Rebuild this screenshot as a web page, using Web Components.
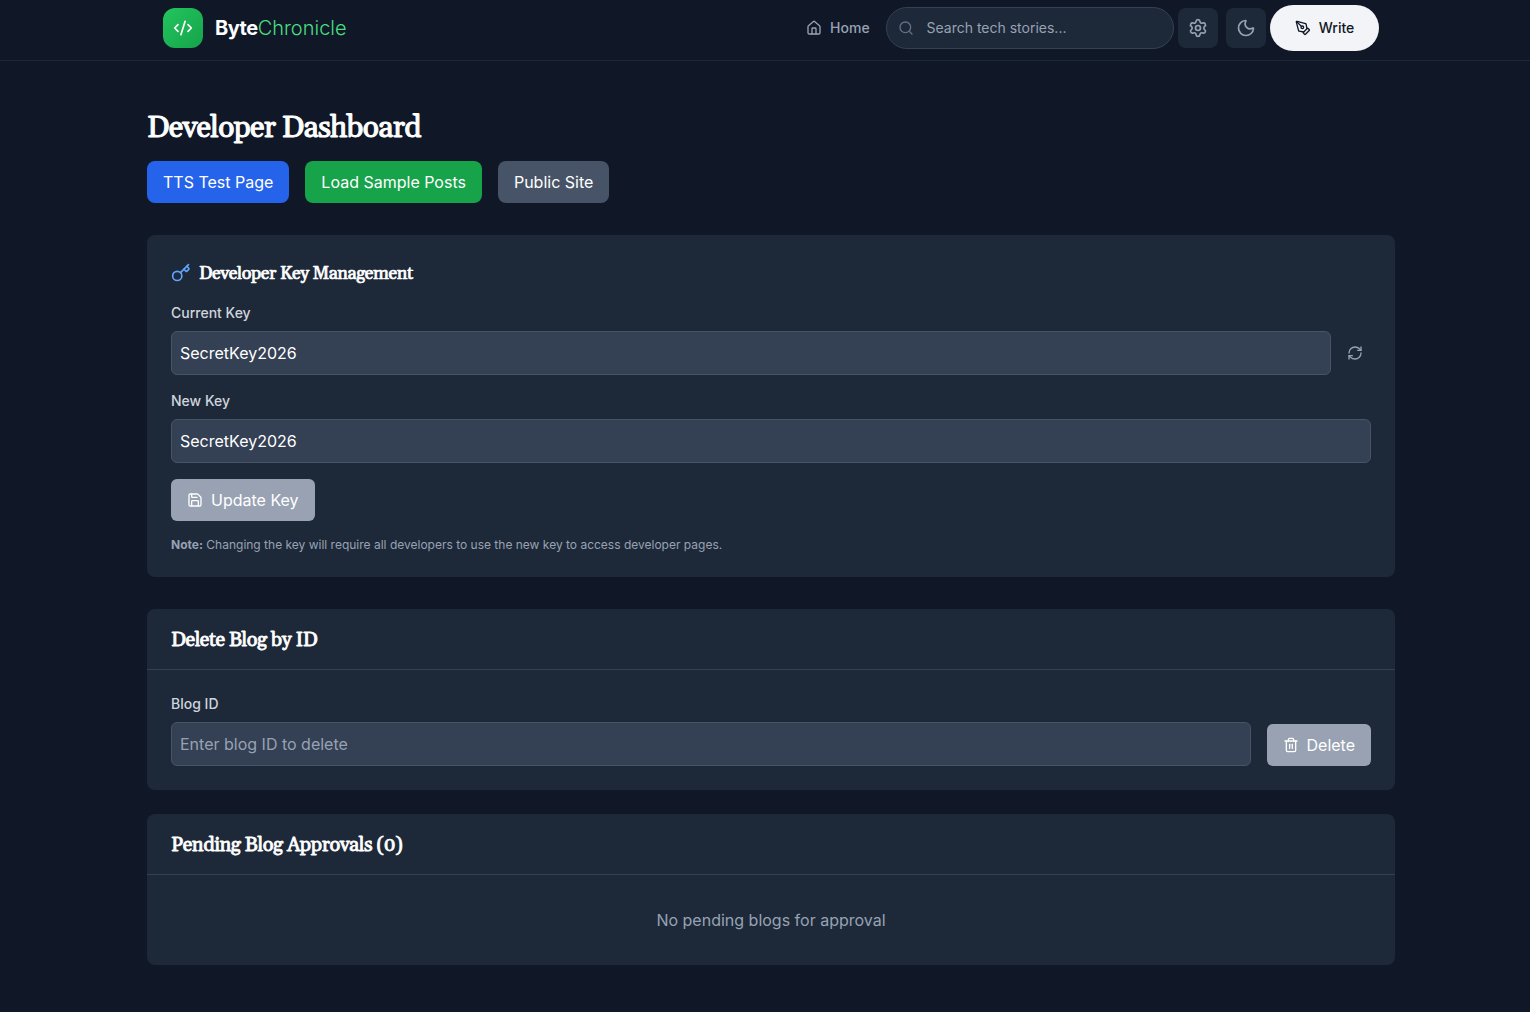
<!DOCTYPE html>
<html lang="en">
<head>
<meta charset="utf-8">
<title>ByteChronicle</title>
<style>
html,body{margin:0;padding:0;background:#101828}
body{font-family:Inter,"Liberation Sans",sans-serif;font-size:16px;line-height:24px;color:#fff;overflow:hidden;height:1012px}
</style>
</head>
<body>
<dev-page></dev-page>
<script>
const ICONS={
code:'<path d="m18 16 4-4-4-4"/><path d="m6 8-4 4 4 4"/><path d="m14.5 4-5 16"/>',
home:'<path d="M15 21v-8a1 1 0 0 0-1-1h-4a1 1 0 0 0-1 1v8"/><path d="M3 10a2 2 0 0 1 .709-1.528l7-5.999a2 2 0 0 1 2.582 0l7 5.999A2 2 0 0 1 21 10v9a2 2 0 0 1-2 2H5a2 2 0 0 1-2-2z"/>',
search:'<path d="m21 21-4.34-4.34"/><circle cx="11" cy="11" r="8"/>',
settings:'<path d="M9.671 4.136a2.34 2.34 0 0 1 4.659 0 2.34 2.34 0 0 0 3.319 1.915 2.34 2.34 0 0 1 2.33 4.033 2.34 2.34 0 0 0 0 3.831 2.34 2.34 0 0 1-2.33 4.033 2.34 2.34 0 0 0-3.319 1.915 2.34 2.34 0 0 1-4.659 0 2.34 2.34 0 0 0-3.32-1.915 2.34 2.34 0 0 1-2.33-4.033 2.34 2.34 0 0 0 0-3.831A2.34 2.34 0 0 1 6.35 6.051a2.34 2.34 0 0 0 3.319-1.915"/><circle cx="12" cy="12" r="3"/>',
moon:'<path d="M20.985 12.486a9 9 0 1 1-9.473-9.472c.405-.022.617.46.402.803a6 6 0 0 0 8.268 8.268c.344-.215.825-.004.803.401"/>',
pen:'<path d="M15.707 21.293a1 1 0 0 1-1.414 0l-1.586-1.586a1 1 0 0 1 0-1.414l5.586-5.586a1 1 0 0 1 1.414 0l1.586 1.586a1 1 0 0 1 0 1.414z"/><path d="m18 13-1.375-6.874a1 1 0 0 0-.746-.776L3.235 2.028a1 1 0 0 0-1.207 1.207L5.35 15.879a1 1 0 0 0 .776.746L13 18"/><path d="m2.3 2.3 7.286 7.286"/><circle cx="11" cy="11" r="2"/>',
key:'<path d="m15.5 7.5 2.3 2.3a1 1 0 0 0 1.4 0l2.1-2.1a1 1 0 0 0 0-1.4L19 4"/><path d="m21 2-9.6 9.6"/><circle cx="7.5" cy="15.5" r="5.5"/>',
refresh:'<path d="M3 12a9 9 0 0 1 9-9 9.75 9.75 0 0 1 6.74 2.74L21 8"/><path d="M21 3v5h-5"/><path d="M21 12a9 9 0 0 1-9 9 9.75 9.75 0 0 1-6.74-2.74L3 16"/><path d="M8 16H3v5"/>',
save:'<path d="M15.2 3a2 2 0 0 1 1.4.6l3.8 3.8a2 2 0 0 1 .6 1.4V19a2 2 0 0 1-2 2H5a2 2 0 0 1-2-2V5a2 2 0 0 1 2-2z"/><path d="M17 21v-7a1 1 0 0 0-1-1H8a1 1 0 0 0-1 1v7"/><path d="M7 3v4a1 1 0 0 0 1 1h7"/>',
trash:'<path d="M10 11v6"/><path d="M14 11v6"/><path d="M19 6v14a2 2 0 0 1-2 2H7a2 2 0 0 1-2-2V6"/><path d="M3 6h18"/><path d="M8 6V4a2 2 0 0 1 2-2h4a2 2 0 0 1 2 2v2"/>'
};
function define(name,render){
  customElements.define(name,class extends HTMLElement{
    constructor(){super();this.attachShadow({mode:'open'});}
    connectedCallback(){this.shadowRoot.innerHTML=render(this);}
  });
}
define('line-icon',el=>{
  const s=el.getAttribute('size')||16;
  return `<style>:host{display:block;flex:none;width:${s}px;height:${s}px}svg{display:block}</style>
  <svg width="${s}" height="${s}" viewBox="0 0 24 24" fill="none" stroke="currentColor" stroke-width="2" stroke-linecap="round" stroke-linejoin="round">${ICONS[el.getAttribute('name')]}</svg>`;
});
define('action-button',()=>`<style>
:host{display:block;flex:none}
button{display:flex;align-items:center;gap:8px;height:42px;padding:0 16px;border:0;border-radius:var(--r,8px);background:var(--bg);color:#fff;font:inherit;white-space:nowrap}
</style><button><slot></slot></button>`);
define('icon-button',()=>`<style>
:host{display:block;flex:none}
button{display:flex;align-items:center;justify-content:center;width:40px;height:40px;padding:0;border:0;border-radius:8px;background:#1d2939;color:#98a2b3}
</style><button><slot></slot></button>`);
define('text-field',el=>`<style>
:host{display:block;flex:1;min-width:0}
input{box-sizing:border-box;display:block;width:100%;height:44px;padding:0 8px;border:1px solid #475467;border-radius:6px;background:#344054;color:#fff;font:inherit;outline:0}
input::placeholder{color:#98a2b3;opacity:1}
</style><input type="text" value="${el.getAttribute('value')||''}" placeholder="${el.getAttribute('placeholder')||''}">`);
define('field-label',()=>`<style>:host{display:block;font-size:14px;line-height:20px;font-weight:500;color:#d0d5dd}</style><slot></slot>`);
define('serif-title',()=>`<style>
:host{display:block}
h2{margin:0;font-family:Gelasio,Georgia,"Liberation Serif",serif;font-weight:400;-webkit-text-stroke:var(--stroke,.76px) #fff;color:#fff;white-space:nowrap;font-size:var(--fs,20px);line-height:var(--lh,28px);letter-spacing:-0.025em}
</style><h2><slot></slot></h2>`);
define('panel-card',()=>`<style>
:host{display:block;background:#1d2939;border-radius:8px}
.head{padding:17px 24px 15px;border-bottom:1px solid #344054}
</style><div class="head"><slot name="title"></slot></div><slot></slot>`);
define('brand-logo',()=>`<style>
:host{display:flex;align-items:center;gap:12px}
.tile{display:flex;align-items:center;justify-content:center;width:40px;height:40px;border-radius:12px;background:linear-gradient(135deg,#22c55e,#16a34a);color:#fff}
.name{font-size:20px;line-height:28px;font-weight:700;color:#fff;letter-spacing:-0.5px}
.name span{font-weight:300;color:#4ade80;letter-spacing:0}
</style><div class="tile"><line-icon name="code" size="20"></line-icon></div><div class="name">Byte<span>Chronicle</span></div>`);
define('search-box',()=>`<style>
:host{box-sizing:border-box;display:flex;align-items:center;gap:12.5px;width:288px;height:42px;padding:0 16px 0 11px;border:1px solid #344054;border-radius:21px;background:#1d2939;color:#667085}
input{flex:1;min-width:0;padding:0;border:0;background:none;color:#fff;font:inherit;font-size:14px;outline:0}
input::placeholder{color:#98a2b3;opacity:1}
</style><line-icon name="search"></line-icon><input placeholder="Search tech stories...">`);
define('site-header',()=>`<style>
:host{box-sizing:border-box;display:flex;align-items:center;justify-content:space-between;height:61px;padding:0 151px 5px 163px;border-bottom:1px solid #1d2939;background:#101828}
.right{display:flex;align-items:center}
.home{display:flex;align-items:center;gap:8px;margin-right:16.4px;font-size:14px;line-height:20px;font-weight:500;color:#98a2b3}
search-box{margin-right:4px}
icon-button+icon-button{margin-left:8px}
.write{display:flex;align-items:center;justify-content:center;gap:8px;width:109px;height:46px;margin-left:4px;padding:0;border:0;border-radius:23px;background:#f2f4f7;color:#101828;font:inherit;font-size:14px;font-weight:500}
</style><brand-logo></brand-logo>
<div class="right"><div class="home"><line-icon name="home"></line-icon><span>Home</span></div>
<search-box></search-box>
<icon-button><line-icon name="settings" size="20"></line-icon></icon-button>
<icon-button><line-icon name="moon" size="20"></line-icon></icon-button>
<button class="write"><line-icon name="pen"></line-icon><span>Write</span></button></div>`);
define('key-manager',()=>`<style>
:host{box-sizing:border-box;display:block;height:342px;padding:24px;background:#1d2939;border-radius:8px}
.title{display:flex;align-items:center;gap:8px;height:28px;margin-bottom:16px;color:#60a5fa}
serif-title{padding-top:2px}
.row{display:flex;align-items:center}
.refresh{display:flex;align-items:center;justify-content:center;width:32px;margin-left:8px;color:#98a2b3}
field-label{margin-bottom:8px}
.group{margin-bottom:16px}
action-button{--bg:#98a2b3;--r:6px;display:flex}
p{margin:16px 0 0;font-size:12px;line-height:16px;color:#98a2b3}
b{font-weight:700}
</style>
<div class="title"><line-icon name="key" size="20"></line-icon><serif-title style="--fs:18px;--stroke:.7px">Developer Key Management</serif-title></div>
<div class="group"><field-label>Current Key</field-label><div class="row"><text-field value="SecretKey2026"></text-field><div class="refresh"><line-icon name="refresh"></line-icon></div></div></div>
<div class="group"><field-label>New Key</field-label><text-field value="SecretKey2026"></text-field></div>
<action-button><line-icon name="save"></line-icon><span>Update Key</span></action-button>
<p><b>Note:</b> Changing the key will require all developers to use the new key to access developer pages.</p>`);
define('dev-page',()=>`<style>
:host{display:block}
main{width:1248px;margin-left:147px;padding-top:49px}
.actions{display:flex;gap:16px;margin:15px 0 32px}
.delete{display:flex;align-items:flex-end;gap:16px;padding:24px}
.field{flex:1}
field-label{margin-bottom:8px}
.empty{padding:33px 0;text-align:center;color:#98a2b3}
</style>
<site-header></site-header>
<main>
<serif-title style="--fs:30px;--lh:36px;--stroke:1px">Developer Dashboard</serif-title>
<div class="actions"><action-button style="--bg:#2563eb">TTS Test Page</action-button><action-button style="--bg:#16a34a">Load Sample Posts</action-button><action-button style="--bg:#475467">Public Site</action-button></div>
<key-manager></key-manager>
<panel-card style="margin-top:32px"><serif-title slot="title">Delete Blog by ID</serif-title>
<div class="delete"><div class="field"><field-label>Blog ID</field-label><text-field placeholder="Enter blog ID to delete"></text-field></div>
<action-button style="--bg:#98a2b3;--r:6px"><line-icon name="trash"></line-icon><span>Delete</span></action-button></div></panel-card>
<panel-card style="margin-top:24px"><serif-title slot="title">Pending Blog Approvals (0)</serif-title><div class="empty">No pending blogs for approval</div></panel-card>
</main>`);
</script>
</body>
</html>
